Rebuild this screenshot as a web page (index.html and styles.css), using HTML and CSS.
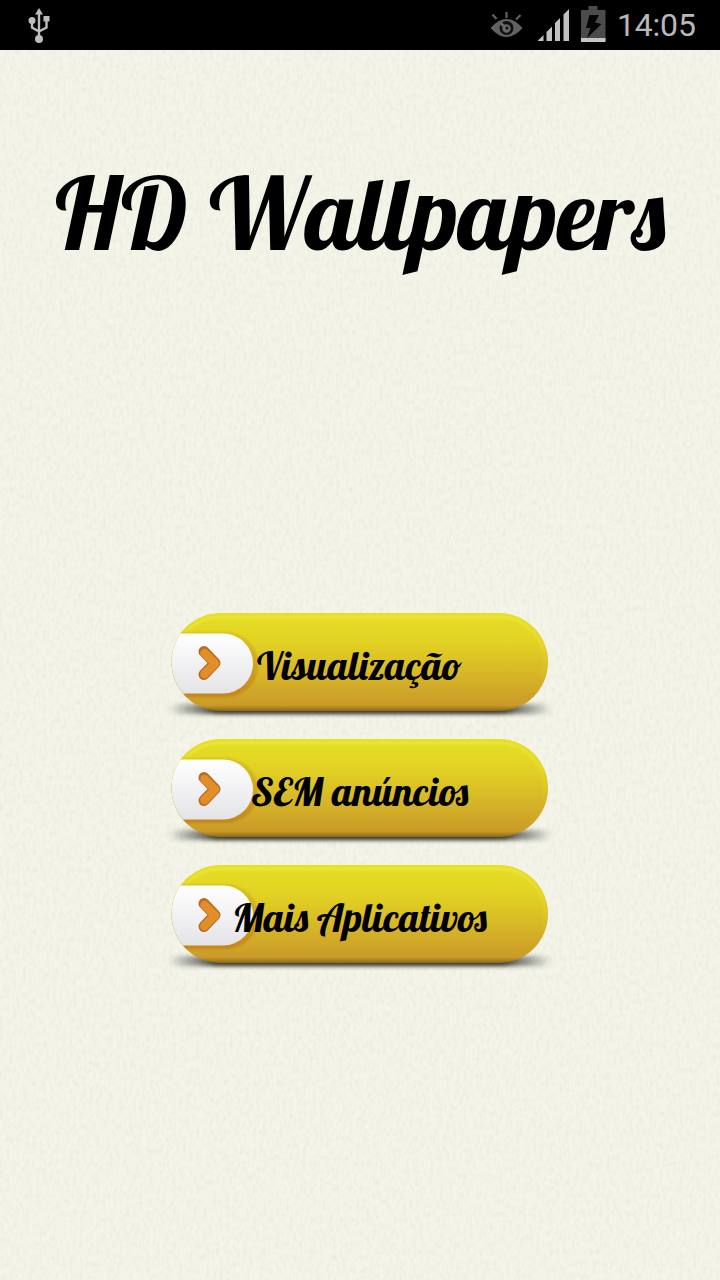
FILE: index.html
```
<!DOCTYPE html>
<html lang="pt">
<head>
  <meta charset="UTF-8">
  <meta name="viewport" content="width=device-width, initial-scale=1.0">
  <title>HD Wallpapers</title>
  <link rel="stylesheet" href="styles.css">
</head>
<body>

  <!-- Paper texture and shared button art -->
  <svg class="texture" aria-hidden="true">
    <defs>
      <filter id="paper" x="0" y="0" width="100%" height="100%">
        <feTurbulence type="fractalNoise" baseFrequency="0.3 0.16" numOctaves="2" seed="4" stitchTiles="stitch"/>
        <feColorMatrix type="matrix" values="0 0 0 0 0.5  0 0 0 0 0.5  0 0 0 0 0.42  0.32 0 0 0 -0.13"/>
      </filter>
      <filter id="soft" x="-10%" y="-80%" width="120%" height="260%">
        <feGaussianBlur stdDeviation="4 2"/>
      </filter>
      <filter id="edge" x="-10%" y="-10%" width="120%" height="120%">
        <feGaussianBlur stdDeviation="0.8"/>
      </filter>
      <linearGradient id="gold" x1="0" y1="0" x2="0" y2="1">
        <stop offset="0" stop-color="#e5df25"/>
        <stop offset="0.3" stop-color="#e2d224"/>
        <stop offset="0.65" stop-color="#d6b427"/>
        <stop offset="0.94" stop-color="#ca9b28"/>
        <stop offset="1" stop-color="#8a6a17"/>
      </linearGradient>
      <linearGradient id="shine" x1="0" y1="0" x2="0" y2="1">
        <stop offset="0" stop-color="#f0e93c"/>
        <stop offset="0.7" stop-color="#e8d93a" stop-opacity="0"/>
      </linearGradient>
      <linearGradient id="tabFill" x1="0" y1="0" x2="0" y2="1">
        <stop offset="0" stop-color="#ffffff"/>
        <stop offset="1" stop-color="#e4e4e8"/>
      </linearGradient>
      <linearGradient id="tabShade" x1="0" y1="0" x2="0" y2="1">
        <stop offset="0" stop-color="#d8c51d"/>
        <stop offset="0.5" stop-color="#cfa61f"/>
        <stop offset="1" stop-color="#c5851a"/>
      </linearGradient>
      <linearGradient id="shadow" x1="0" y1="0" x2="1" y2="0">
        <stop offset="0" stop-color="#333" stop-opacity="0.1"/>
        <stop offset="0.12" stop-color="#333" stop-opacity="0.9"/>
        <stop offset="0.88" stop-color="#333" stop-opacity="0.9"/>
        <stop offset="1" stop-color="#333" stop-opacity="0.1"/>
      </linearGradient>
      <clipPath id="pillClip">
        <rect x="11.500" y="7" width="376.500" height="98" rx="49"/>
      </clipPath>
      <symbol id="pill" viewBox="0 0 400 116">
        <rect x="12" y="98" width="376" height="10" rx="5" fill="url(#shadow)" filter="url(#soft)"/>
        <rect x="50" y="97" width="300" height="10" rx="5" fill="#2d260d" opacity="0.5" filter="url(#soft)"/>
        <rect x="11.500" y="7" width="376.500" height="98" rx="49" fill="url(#gold)"/>
        <rect x="14.500" y="11" width="370.500" height="91" rx="45.500" fill="none" stroke="url(#shine)" stroke-width="2" filter="url(#edge)"/>
        <g clip-path="url(#pillClip)">
          <path d="M0 26H66a32 32 0 0 1 0 65H0z" fill="url(#tabShade)" filter="url(#edge)"/>
          <path d="M0 27.500H63a30 30 0 0 1 0 60H0z" fill="url(#tabFill)"/>
        </g>
        <path d="M44 45.500l11 11.500-11 11.500" fill="none" stroke="#b86c23" stroke-width="11" stroke-linecap="round" stroke-linejoin="round"/>
        <path d="M44.500 47l10.500 10.500-10.500 10.500" fill="none" stroke="#e28f29" stroke-width="8.500" stroke-linecap="round" stroke-linejoin="round"/>
      </symbol>
    </defs>
    <rect width="100%" height="100%" filter="url(#paper)"/>
  </svg>

  <!-- Status bar -->
  <header class="status-bar">
    <svg class="usb" width="24" height="36" viewBox="0 0 24 36">
      <g fill="none" stroke="#bdbdbd" stroke-width="2.400">
        <path d="M12 4V30M5 14V19.500L12 23.500M19.500 11V19.500L12 23.500"/>
      </g>
      <g fill="#bdbdbd">
        <path d="M12 0L16 6.500H8z"/>
        <circle cx="5" cy="12.500" r="3.500"/>
        <rect x="16.500" y="8" width="6" height="5.500"/>
        <circle cx="12" cy="31" r="4"/>
      </g>
    </svg>
    <div class="status-icons">
      <svg class="eye" width="34" height="28" viewBox="0 0 34 28">
        <path d="M0.500 17Q16.500 -1 32.500 17Q16.500 35 0.500 17z" fill="#626262"/>
        <circle cx="16.500" cy="17" r="7" fill="#101010"/>
        <circle cx="16.500" cy="17.500" r="4.200" fill="#686868"/>
        <path d="M16.500 17.500L10.500 12" stroke="#686868" stroke-width="3"/>
        <circle cx="17" cy="17" r="1.500" fill="#101010"/>
        <path d="M2.500 3.500L6.500 8M16.500 1V7M30.500 4L26 8.500" stroke="#626262" stroke-width="2.200"/>
      </svg>
      <svg class="signal" width="34" height="34" viewBox="0 0 34 34" fill="#c1c1c1">
        <path d="M0.500 33L6.500 27V33zM9.500 33V24L15 18.500V33zM18 33V15L23 10V33zM26.500 33V6.500L32 1V33z"/>
      </svg>
      <svg class="battery" width="26" height="36" viewBox="0 0 26 36">
        <path d="M8.500 0H17.500V4H25.500V36H1V4H8.500z" fill="#4b4b4b"/>
        <rect x="1" y="32" width="24.500" height="4" fill="#c5c5c5"/>
        <path d="M9.500 9H19L15 16.500L21.500 18L7 32L10.500 22H6z" fill="#050505"/>
      </svg>
      <span class="clock">14:05</span>
    </div>
  </header>

  <main>
    <h1>HD Wallpapers</h1>

    <nav class="menu">
      <button class="menu-button">
        <svg width="400" height="116"><use href="#pill" width="400" height="116"/></svg>
        <span>Visualização</span>
      </button>
      <button class="menu-button">
        <svg width="400" height="116"><use href="#pill" width="400" height="116"/></svg>
        <span>SEM anúncios</span>
      </button>
      <button class="menu-button">
        <svg width="400" height="116"><use href="#pill" width="400" height="116"/></svg>
        <span>Mais Aplicativos</span>
      </button>
    </nav>
  </main>

</body>
</html>
```
FILE: styles.css
```
/* General Styles */
* {
  padding: 0;
  margin: 0;
  box-sizing: border-box;
}

body {
  height: 100vh;
  overflow: hidden;
  position: relative;
  background: #f4f5e8;
  color: #000;
  font-family: Roboto, sans-serif;
  display: flex;
  flex-direction: column;
}

svg {
  display: block;
}

.texture {
  position: absolute;
  top: 0;
  left: 0;
  width: 100%;
  height: 100%;
  z-index: -1;
}

/* Status bar */
.status-bar {
  height: 50px;
  flex: none;
  padding: 0 24px 0 27px;
  background: #000;
  display: flex;
  justify-content: space-between;
  align-items: center;
}

.usb {
  margin-top: 2px;
}

.status-icons {
  display: flex;
  align-items: center;
}

.eye {
  margin-right: 13px;
}

.signal {
  margin-right: 9px;
}

.battery {
  margin-right: 11px;
  margin-bottom: 2px;
}

.clock {
  width: 79px;
  font-size: 32px;
  line-height: 50px;
  letter-spacing: -0.2px;
  color: #b8b8b8;
  white-space: nowrap;
}

/* Title and menu */
main {
  display: flex;
  flex-direction: column;
  align-items: center;
}

h1,
.menu-button {
  font-family: Lobster, "Liberation Serif", serif;
  font-weight: normal;
  white-space: nowrap;
}

h1 {
  height: 130px;
  margin-top: 103px;
  font-size: 100px;
  line-height: 120px;
}

.menu {
  margin-top: 323px;
  display: flex;
  flex-direction: column;
  gap: 10px;
}

/* Label sits on top of the drawn pill */
.menu-button {
  display: grid;
  place-items: center;
  border: none;
  background: none;
  color: #000;
  font-size: 40px;
  line-height: 50px;
  cursor: pointer;
}

.menu-button svg,
.menu-button span {
  grid-area: 1 / 1;
}

.menu-button span {
  padding: 2px 1px 0 0;
}
```
